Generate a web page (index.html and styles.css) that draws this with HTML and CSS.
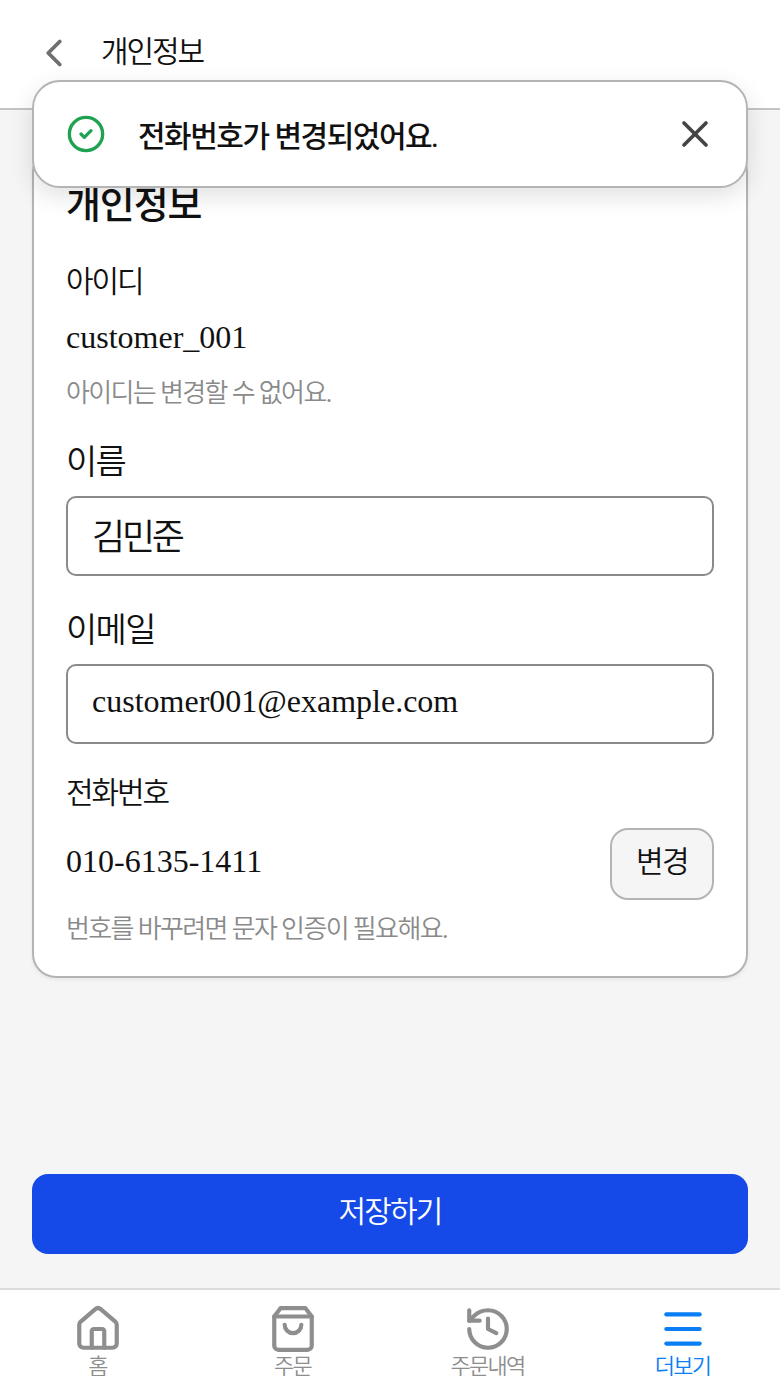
FILE: index.html
```html
<!DOCTYPE html>
<html lang="ko">
<head>
    <meta charset="UTF-8">
    <meta name="viewport" content="width=device-width, initial-scale=1.0">
    <title>개인정보</title>
    <link rel="stylesheet" href="styles.css">
</head>
<body>

    <header class="topbar">
        <button class="back" type="button" aria-label="뒤로">
            <svg width="46" height="46" viewBox="0 0 24 24" fill="none" stroke="#6f6f6f" stroke-width="2" stroke-linecap="round" stroke-linejoin="round"><path d="m15 18-6-6 6-6"/></svg>
        </button>
        <h1 class="page-title">개인정보</h1>
    </header>

    <div class="toast">
        <svg class="toast-check" width="40" height="40" viewBox="0 0 24 24" fill="none" stroke="#1fa352" stroke-width="2" stroke-linecap="round" stroke-linejoin="round"><circle cx="12" cy="12" r="10"/><path d="m9 12 2 2 4-4"/></svg>
        <p class="toast-text">전화번호가 변경되었어요.</p>
        <svg class="toast-close" width="44" height="44" viewBox="0 0 24 24" fill="none" stroke="#444" stroke-width="2" stroke-linecap="round" stroke-linejoin="round"><path d="M18 6 6 18"/><path d="m6 6 12 12"/></svg>
    </div>

    <main class="content">
        <section class="card">
            <h2 class="card-title">개인정보</h2>

            <div class="field">
                <div class="label-sm">아이디</div>
                <div class="value">customer_001</div>
                <div class="hint">아이디는 변경할 수 없어요.</div>
            </div>

            <div class="field-input name-field">
                <label class="label-lg" for="name">이름</label>
                <input class="text-input input-ko" id="name" type="text" value="김민준">
            </div>

            <div class="field-input email-field">
                <label class="label-lg" for="email">이메일</label>
                <input class="text-input" id="email" type="email" value="customer001@example.com">
            </div>

            <div class="field phone-field">
                <div class="label-sm">전화번호</div>
                <div class="phone-row">
                    <div class="value">010-6135-1411</div>
                    <button class="change-btn" type="button">변경</button>
                </div>
                <div class="hint">번호를 바꾸려면 문자 인증이 필요해요.</div>
            </div>
        </section>

        <button class="save-btn" type="button">저장하기</button>
    </main>

    <nav class="tabbar">
        <a class="tab">
            <svg width="50" height="50" viewBox="0 0 24 24" fill="none" stroke="#8e8e8e" stroke-width="2" stroke-linecap="round" stroke-linejoin="round"><path d="M15 21v-8a1 1 0 0 0-1-1h-4a1 1 0 0 0-1 1v8"/><path d="M3 10a2 2 0 0 1 .709-1.528l7-5.999a2 2 0 0 1 2.582 0l7 5.999A2 2 0 0 1 21 10v9a2 2 0 0 1-2 2H5a2 2 0 0 1-2-2z"/></svg>
            <span>홈</span>
        </a>
        <a class="tab">
            <svg width="50" height="50" viewBox="0 0 24 24" fill="none" stroke="#8e8e8e" stroke-width="2" stroke-linecap="round" stroke-linejoin="round"><path d="M6 2 3 6v14a2 2 0 0 0 2 2h14a2 2 0 0 0 2-2V6l-3-4Z"/><path d="M3 6h18"/><path d="M16 10a4 4 0 0 1-8 0"/></svg>
            <span>주문</span>
        </a>
        <a class="tab">
            <svg width="50" height="50" viewBox="0 0 24 24" fill="none" stroke="#8e8e8e" stroke-width="2" stroke-linecap="round" stroke-linejoin="round"><path d="M3 12a9 9 0 1 0 9-9 9.750 9.750 0 0 0-6.740 2.740L3 8"/><path d="M3 3v5h5"/><path d="M12 7v5l4 2"/></svg>
            <span>주문내역</span>
        </a>
        <a class="tab tab-active">
            <svg width="50" height="50" viewBox="0 0 24 24" fill="none" stroke="#0a7ff5" stroke-width="2" stroke-linecap="round"><path d="M4 5h16"/><path d="M4 12h16"/><path d="M4 19h16"/></svg>
            <span>더보기</span>
        </a>
    </nav>

</body>
</html>
```

FILE: styles.css
```css
* {
    box-sizing: border-box;
}
html, body {
    margin: 0;
    height: 1386px;
}
body {
    position: relative;
    display: flex;
    flex-direction: column;
    overflow: hidden;
    background-color: #f5f5f5;
    color: #111;
    font-family: "Liberation Serif", "Noto Sans CJK KR", serif;
    font-weight: 350;
}
.topbar {
    display: flex;
    align-items: center;
    height: 110px;
    padding: 0 0 0 31px;
    background: #fff;
    border-bottom: 2px solid #c4c4c4;
}
.back {
    display: flex;
    padding: 0;
    margin-bottom: 2px;
    background: none;
    border: none;
}
.page-title {
    margin: 0 0 10px 24px;
    font-size: 30px;
    font-weight: 350;
    letter-spacing: -0.07em;
}
.toast {
    position: absolute;
    top: 80px;
    left: 32px;
    right: 32px;
    height: 108px;
    display: flex;
    align-items: center;
    padding: 0 29px 0 32px;
    background: #fff;
    border: 2px solid #b4b4b4;
    border-radius: 28px;
    box-shadow: 0 8px 24px rgba(0,0,0,0.12);
}
.toast-text {
    flex: 1;
    margin: 0 0 0 32px;
    font-size: 30px;
    font-weight: 500;
    letter-spacing: -0.05em;
}
.content {
    flex: 1;
    display: flex;
    flex-direction: column;
    justify-content: space-between;
    padding: 38px 32px 34px;
}
.card {
    height: 830px;
    padding: 29px 32px 0;
    background: #fff;
    border: 2px solid #b4b4b4;
    border-radius: 24px;
    box-shadow: 0 2px 4px rgba(0,0,0,0.06);
}
.card-title {
    margin: 0 0 31px;
    font-size: 38px;
    line-height: 52px;
    font-weight: 500;
    letter-spacing: -0.03em;
}
.label-sm {
    font-size: 30px;
    line-height: 40px;
    letter-spacing: -0.07em;
}
.value {
    font-size: 32px;
    line-height: 40px;
}
.field .value {
    margin-top: 15px;
}
.hint {
    margin-top: 19px;
    font-size: 26px;
    line-height: 36px;
    color: #8a8a8a;
    letter-spacing: -0.063em;
}
.label-lg {
    display: block;
    font-size: 34px;
    line-height: 44px;
    margin-bottom: 11px;
    letter-spacing: -0.05em;
}
.name-field {
    margin-top: 29px;
}
.email-field {
    margin-top: 33px;
}
.text-input {
    display: block;
    width: 100%;
    height: 80px;
    padding: 0 24px 6px;
    background: #fff;
    border: 2px solid #8a8a8a;
    border-radius: 10px;
    color: #111;
    font-family: inherit;
    font-weight: 350;
    font-size: 32px;
}
.input-ko {
    padding-bottom: 4px;
    font-size: 36px;
    letter-spacing: -0.09em;
}
.phone-field {
    margin-top: 29px;
}
.phone-row {
    display: flex;
    align-items: center;
    justify-content: space-between;
    margin-top: 15px;
}
.phone-row .value {
    margin: 0 0 6px;
}
.change-btn {
    width: 104px;
    height: 72px;
    padding: 0 0 10px;
    background: #f5f5f5;
    border: 2px solid #b4b4b4;
    border-radius: 18px;
    color: #111;
    font-family: inherit;
    font-weight: 350;
    font-size: 30px;
    letter-spacing: -0.05em;
}
.phone-field .hint {
    margin-top: 12px;
}
.save-btn {
    height: 80px;
    padding-bottom: 12px;
    background: #1549e8;
    border: none;
    border-radius: 16px;
    color: #fff;
    font-family: inherit;
    font-weight: 350;
    font-size: 30px;
    letter-spacing: -0.06em;
}
.tabbar {
    display: grid;
    grid-template-columns: repeat(4, 1fr);
    height: 98px;
    padding-top: 14px;
    background: #fff;
    border-top: 2px solid #dcdcdc;
    overflow: hidden;
}
.tab {
    display: flex;
    flex-direction: column;
    align-items: center;
    height: 72px;
    overflow: hidden;
    color: #8e8e8e;
    font-size: 22px;
    line-height: 26px;
    letter-spacing: -0.08em;
}
.tab svg {
    flex: none;
}
.tab-active {
    color: #0a7ff5;
}
```
